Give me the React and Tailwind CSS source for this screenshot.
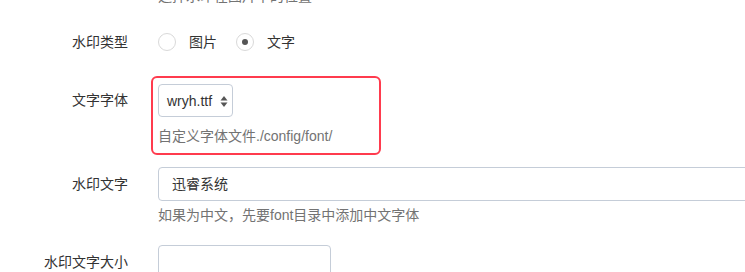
import React from 'react';

// Watermark settings form fragment
const Radio = ({ checked, label }) => (
  <label className="flex items-center">
    <span className="w-[18px] h-[18px] rounded-full border border-[#d9d9d9] bg-white flex items-center justify-center">
      {checked && <span className="w-[6px] h-[6px] rounded-full bg-[#555]" />}
    </span>
    <span className="ml-[13px] text-[#333]">{label}</span>
  </label>
);

const App = () => {
  return (
    <div
      className="w-[745px] h-[272px] overflow-hidden bg-white text-[14px] leading-[20px]"
      style={{ fontFamily: '"Liberation Sans", "Noto Sans CJK SC", sans-serif' }}
    >
      {/* cut-off help text from previous row */}
      <div className="-mt-[14px] pl-[158px] text-[#737373]">选择水印在图片中的位置</div>

      {/* 水印类型 */}
      <div className="mt-[19px] flex items-center h-[34px]">
        <div className="w-[128px] shrink-0 text-right text-[#333]">水印类型</div>
        <div className="ml-[30px] flex items-center gap-[19px]">
          <Radio label="图片" />
          <Radio checked label="文字" />
        </div>
      </div>

      {/* 文字字体 */}
      <div className="mt-[17px] flex items-start">
        <div className="w-[128px] shrink-0 mt-[14px] text-right text-[#333]">文字字体</div>
        <div className="ml-[23px] w-[230px] border-2 border-[#ff3b4e] rounded-[6px] pl-[5px] pt-[6px] pb-[7px]">
          <div className="relative w-[75px] h-[33px] border border-[#c5cdd8] rounded-[4px] flex items-center pl-[8px] text-[#333]">
            wryh.ttf
            <svg className="absolute right-[4px] top-[10px]" width="8" height="13" viewBox="0 0 8 13">
              <path d="M4 1 L7.5 5.5 L0.5 5.5 Z" fill="#555" />
              <path d="M4 12 L7.5 7.5 L0.5 7.5 Z" fill="#555" />
            </svg>
          </div>
          <div className="mt-[9px] text-[#737373]">自定义字体文件./config/font/</div>
        </div>
      </div>

      {/* 水印文字 */}
      <div className="mt-[12px] flex items-center h-[34px]">
        <div className="w-[128px] shrink-0 text-right text-[#333]">水印文字</div>
        <div className="ml-[30px] shrink-0 w-[640px] h-[34px] border border-[#c5cdd8] rounded-[4px] flex items-center pl-[13px] text-[#333]">
          迅睿系统
        </div>
      </div>
      <div className="mt-[4px] pl-[158px] text-[#737373]">如果为中文，先要font目录中添加中文字体</div>

      {/* 水印文字大小 */}
      <div className="mt-[20px] flex items-center h-[34px]">
        <div className="w-[128px] shrink-0 text-right text-[#333]">水印文字大小</div>
        <div className="ml-[30px] shrink-0 w-[173px] h-[34px] border border-[#c5cdd8] rounded-[4px]" />
      </div>
    </div>
  );
};

export default App;
